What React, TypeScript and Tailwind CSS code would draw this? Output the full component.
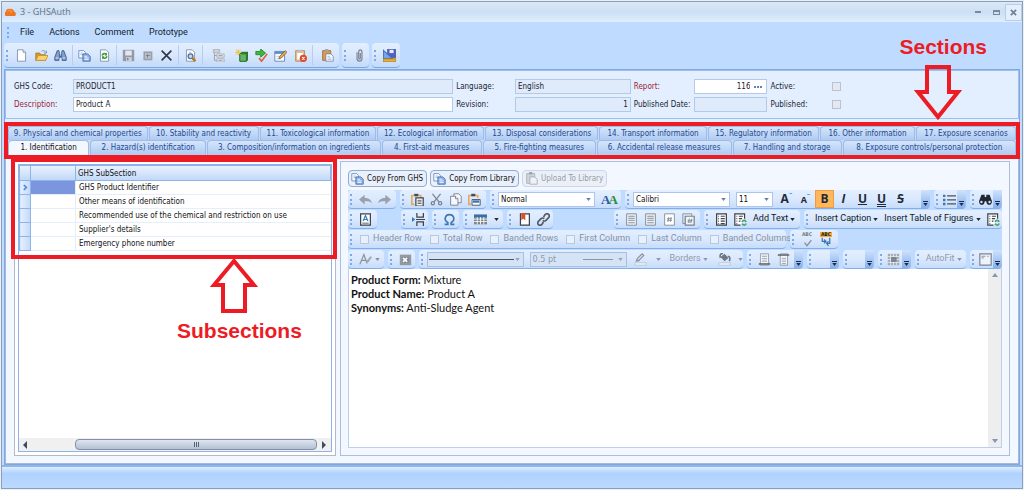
import type { ReactNode } from "react";
import clsx from "clsx";

const subsections = [
  "GHS Product Identifier",
  "Other means of identification",
  "Recommended use of the chemical and restriction on use",
  "Supplier's details",
  "Emergency phone number",
];

const upperTabs = [
  "9. Physical and chemical properties",
  "10. Stability and reactivity",
  "11. Toxicological information",
  "12. Ecological information",
  "13. Disposal considerations",
  "14. Transport information",
  "15. Regulatory information",
  "16. Other information",
  "17. Exposure scenarios",
];

const lowerTabs = [
  "1. Identification",
  "2. Hazard(s) identification",
  "3. Composition/information on ingredients",
  "4. First-aid measures",
  "5. Fire-fighting measures",
  "6. Accidental release measures",
  "7. Handling and storage",
  "8. Exposure controls/personal protection",
];

const page = (
  <path d="M3 1h7l3 3v11H3z" fill="#fff" stroke="#7287a8" />
);

const icons: Record<string, ReactNode> = {
  new: <>{page}<path d="M10 1v3h3" fill="#dbe6f5" stroke="#7287a8" /></>,
  open: (
    <>
      <path d="M1 5h5l1 2h6v7H1z" fill="#d69a32" stroke="#a8741d" />
      <path d="M4 8h12l-3 6H1z" fill="#fbd26c" stroke="#c48f2a" />
      <path d="M8 3c2-2 4-1 5 1m1-2v3h-3" fill="none" stroke="#5e87bd" />
    </>
  ),
  find: (
    <g fill="#7fa0cf" stroke="#2f4e82">
      <path d="M4 2h2l1 4v3h2V6l1-4h2l3 8v4h-5v-4H6v4H1v-4z" />
      <path d="M2 11h4M10 11h4M7 5h2" stroke="#e8f1ff" />
    </g>
  ),
  copy: (
    <>
      <path d="M1 2h6l2 2v7H1z" fill="#fff" stroke="#5e83bd" />
      <path d="M3 5h3M3 7h3" stroke="#8facd8" />
      <path d="M6 6h6l3 3v6H6z" fill="#8fb2e8" stroke="#3d66ab" />
      <path d="M8 9h3M8 11h5M8 13h5" stroke="#fff" />
    </>
  ),
  refresh: (
    <>
      {page}
      <path d="M5 8c1-3 4-3 5-1M11 9c-1 3-4 3-5 1" fill="none" stroke="#3c9a34" strokeWidth="2" />
      <path d="M11 4v4H8zM5 13V9h3z" fill="#3c9a34" />
    </>
  ),
  save: (
    <>
      <path d="M1 1h14v14H1z" fill="#9299a6" />
      <path d="M4 2h8v6H4z" fill="#e2e7ee" />
      <path d="M5 10h7v5H5z" fill="#cbd1da" />
      <path d="M6 11h2v3H6z" fill="#808895" />
    </>
  ),
  saveSmall: (
    <>
      <path d="M3 3h11v11H3z" fill="#9aa1ad" />
      <path d="M5 5h7v7H5z" fill="#bac1cb" />
      <path d="M8 6v5M6 8h5" stroke="#747d8b" />
    </>
  ),
  remove: <path d="M2 2l12 12M14 2L2 14" stroke="#303846" strokeWidth="2" />,
  preview: (
    <>
      {page}
      <path d="M6 4h3" stroke="#9cb0ca" />
      <circle cx="8" cy="9" r="3" fill="#b9d8f8" stroke="#536b8f" strokeWidth="1.5" />
      <path d="M10 11l4 4" stroke="#b8782c" strokeWidth="3" />
    </>
  ),
  tree: (
    <>
      <path d="M3 1v13h4M3 8h4" fill="none" stroke="#8d959f" />
      <path d="M1 0h9v5H1z" fill="#b7bdc5" />
      <path d="M6 6h9v4H6zM6 12h9v4H6z" fill="#e3e6ea" stroke="#a6adb6" />
      <path d="M3 2.500h5" stroke="#f4f6f9" />
      <path d="M8 8h5M8 14h5" stroke="#8d959f" />
    </>
  ),
  addCube: (
    <>
      <path d="M6 6l2-2h8v9l-2 2H6z" fill="#2e8a35" stroke="#175c20" />
      <path d="M6 6h8v9H6z" fill="#64b466" stroke="#217229" />
      <path d="M4 0v8M0 4h8M1 1l6 6M7 1L1 7" stroke="#efbd2c" />
    </>
  ),
  approve: (
    <>
      <path d="M1 3h6V0l6 5-6 5V7H1z" fill="#3fba37" stroke="#1f8520" />
      <path d="M5 11l3 4 7-9" fill="none" stroke="#e15a35" strokeWidth="2" />
    </>
  ),
  edit: (
    <>
      <path d="M1 3h12v12H1z" fill="#fff" stroke="#5279b3" />
      <path d="M1 3h12v3H1z" fill="#5d8bd0" />
      <path d="M3 9h6M3 12h5" stroke="#a9bddb" />
      <path d="M6 12l1-3 7-7 2 2-7 7z" fill="#e3ad46" stroke="#806030" />
    </>
  ),
  reject: (
    <>
      <path d="M2 2h11v13H2z" fill="#e9c08c" stroke="#a7865b" />
      <path d="M5 1h5v3H5z" fill="#b9bfc9" />
      <path d="M4 5h7v8H4z" fill="#fff" />
      <circle cx="11.500" cy="11.500" r="4.500" fill="#e04a2c" />
      <path d="M10 10l3 3M13 10l-3 3" stroke="#fff" strokeWidth="1.5" />
    </>
  ),
  paste: (
    <>
      <path d="M2 2h10v12H2z" fill="#d99b4c" stroke="#996a32" />
      <path d="M5 0h4v3H5z" fill="#a1a9b7" />
      <path d="M6 6h6l3 3v6H6z" fill="#fff" stroke="#6a84b0" />
      <path d="M8 9h3M8 11h5M8 13h5" stroke="#9db3d4" />
    </>
  ),
  clip: (
    <path d="M5 4v8c0 4 6 4 6 0V4c0-4-4-4-4 0v7c0 2 2 2 2 0V5" fill="none" stroke="#7d8794" strokeWidth="1.5" />
  ),
  layout: (
    <>
      <path d="M0 1l12 11H0z" fill="#4a84d8" stroke="#2857a8" />
      <path d="M5 0h11v11H5z" fill="#5463ba" />
      <path d="M8 1h5v4H8z" fill="#e6edff" />
      <path d="M1 3l9 8H1z" fill="#72a5ee" />
      <path d="M0 12h16v4H0z" fill="#e8ae36" stroke="#a0782c" />
    </>
  ),
  undo: <path d="M0 8l7-6v4c5 0 8 2 9 7-2-3-5-3-9-3v4z" fill="#9aa1ab" />,
  redo: <path d="M16 8L9 2v4c-5 0-8 2-9 7 2-3 5-3 9-3v4z" fill="#9aa1ab" />,
  pasteDark: (
    <>
      <path d="M4 14H1V3h11v3" fill="none" stroke="#e5a95f" strokeWidth="2" />
      <path d="M4 1h5v3H4z" fill="#444b55" />
      <path d="M6 6h9v10H6z" fill="#fff" stroke="#3b424b" strokeWidth="1.5" />
      <path d="M8 9h5M8 11h5M8 13h5" stroke="#3b424b" />
    </>
  ),
  cut: (
    <g fill="none" stroke="#7b828c" strokeWidth="1.5">
      <path d="M3 1l8 10M13 1L5 11" />
      <circle cx="3.500" cy="12.500" r="2" />
      <circle cx="12.500" cy="12.500" r="2" />
    </g>
  ),
  copyDark: (
    <g fill="#f4f8ff" stroke="#6d747e">
      <path d="M6 1h6l3 3v8H6z" />
      <path d="M2 4h6l3 3v8H2z" />
      <path d="M8 4v3h3" />
    </g>
  ),
  pasteSpecial: (
    <>
      <path d="M4 14H1V3h11v3" fill="none" stroke="#e5a95f" strokeWidth="2" />
      <path d="M4 1h5v3H4z" fill="#444b55" />
      <path d="M5 8h10v7H5z" fill="#fff" stroke="#3b424b" />
      <path d="M6 9h8v3H6z" fill="#3a78b5" />
    </>
  ),
  textBox: (
    <g fill="none" stroke="#39434f">
      <path d="M2 1h12v14H2z" fill="#fff" strokeWidth="1.500" />
      <path d="M5 10l3-7 3 7M6 8h4" stroke="#3a78b5" strokeWidth="1.5" />
      <path d="M4 12.500h8" />
    </g>
  ),
  pageBreak: (
    <g fill="none" stroke="#3b424b" strokeWidth="1.5">
      <path d="M6 0v5h8V0M6 16v-5h8v5M5 8h11" />
      <path d="M0 5l4 3-4 3z" fill="#3a78b5" stroke="none" />
    </g>
  ),
  omega: (
    <path d="M2 14h4v-2C0 8 3 2 8 2s8 6 2 10v2h4" fill="none" stroke="#3a78b5" strokeWidth="2" />
  ),
  table: (
    <>
      <path d="M0 2h16v12H0z" fill="#7c838c" />
      <path d="M0 2h16v3H0z" fill="#2e70b1" />
      <path d="M0 7.500h16M0 10.500h16M4 5v9M8 5v9M12 5v9" stroke="#fff" />
    </>
  ),
  bookmark: (
    <>
      <path d="M3 1h11v14H3z" fill="#fff" stroke="#3b424b" strokeWidth="1.500" />
      <path d="M4 0h5v9L6.500 7 4 9z" fill="#d8512f" />
    </>
  ),
  link: (
    <g fill="none" stroke="#545b65" strokeWidth="2">
      <path d="M8 5l2-3c3-3 7 1 4 4l-3 3c-1 1-3 1-4 0" />
      <path d="M8 11l-2 3c-3 3-7-1-4-4l3-3c1-1 3-1 4 0" />
    </g>
  ),
  pageLines: (
    <g fill="none" stroke="#747b85">
      <path d="M2 1h12v14H2z" fill="#eef3fa" />
      <path d="M4 4h8M4 6.500h8M4 9h8M4 12h8" />
    </g>
  ),
  pageNumber: (
    <g fill="none" stroke="#7b828c">
      <path d="M2 1h12v14H2z" fill="#fff" />
      <path d="M7 5l-1 6M10 5l-1 6M5 7h6M5 9h6" />
    </g>
  ),
  pageCount: (
    <g fill="none" stroke="#7b828c">
      <path d="M1 1h11v12H1z" />
      <path d="M4 4h11v11H4z" fill="#eef3fa" strokeWidth="1.500" />
      <path d="M9 7l-1 5M12 7l-1 5M7 9h6M7 11h5" />
    </g>
  ),
  contents: (
    <g fill="none" stroke="#3b424b">
      <path d="M2 1h12v14H2z" fill="#fff" strokeWidth="1.500" />
      <path d="M4 4h1M7 4h5M4 7h1M7 7h5M4 10h1M7 10h5M4 13h1M7 13h5" strokeWidth="1.500" />
    </g>
  ),
  contentsUpdate: (
    <g fill="none" stroke="#3b424b">
      <path d="M8 15H1V1h12v6" fill="#fff" strokeWidth="1.500" />
      <path d="M3 4h1M6 4h5M3 7h1M6 7h4M3 10h1M6 10h2M3 13h1" strokeWidth="1.500" />
      <path d="M10 11c1-3 4-2 5 0M15 13c-1 3-4 2-5 0" stroke="#4ca36c" strokeWidth="2" />
    </g>
  ),
  bullets: (
    <>
      <path d="M0 2h3v3H0zM0 7h3v3H0zM0 12h3v3H0z" fill="#3a78b5" />
      <path d="M5 3.500h11M5 8.500h11M5 13.500h11" stroke="#4b525c" strokeWidth="1.500" />
    </>
  ),
  binoculars: (
    <path d="M3 2h4v3h2V2h4l3 8c0 6-7 6-7 0H7c0 6-7 6-7 0zM3 9.500a1.500 1.500 0 100 3 1.500 1.500 0 000-3M13 9.500a1.500 1.500 0 100 3 1.500 1.500 0 000-3" fill="#202731" fillRule="evenodd" />
  ),
  pen: (
    <>
      <path d="M3 10l1-3 6-6 2 2-6 6zM3 10l4-1" fill="none" stroke="#8b929d" strokeWidth="1.500" />
      <path d="M1 12h14v3H1z" fill="#edf3fb" stroke="#b6c4d7" />
    </>
  ),
  fill: (
    <>
      <path d="M3 5l5-4 5 5-5 4z" fill="#717883" />
      <path d="M6 1c-3-1-4 2-3 5M12 4c3 0 3 3 2 6" fill="none" stroke="#717883" strokeWidth="2" />
      <path d="M1 12h14v3H1z" fill="#edf3fb" stroke="#b6c4d7" />
    </>
  ),
  footnote: (
    <g fill="none" stroke="#8a919b">
      <path d="M3 1h10v14H3z" fill="#eef3fa" />
      <path d="M5 4h6M5 7h6M5 10h6" />
      <path d="M1 13.500h14" stroke="#656c76" strokeWidth="2" />
    </g>
  ),
  endnote: (
    <g fill="none" stroke="#8a919b">
      <path d="M4 1h9v14H4z" fill="#eef3fa" />
      <path d="M6 7h5M6 10h5M6 13h5" />
      <path d="M1 2.500h14" stroke="#656c76" strokeWidth="2" />
    </g>
  ),
  cells: (
    <>
      <path d="M1 1h14v14H1z" fill="#a4abb5" />
      <path d="M4.500 1v14M8 1v14M11.500 1v14M1 4.500h14M1 8h14M1 11.500h14" stroke="#e9f1fd" />
      <path d="M5 5h7v6H5z" fill="#7d848e" />
    </>
  ),
  frame: (
    <g fill="none" stroke="#7d858f">
      <path d="M1 1h14v14H1z" fill="#edf3fc" strokeWidth="1.500" />
      <path d="M3 4h5M3 6h3M10 4h2" />
    </g>
  ),
  clearBox: (
    <>
      <path d="M1 2h14v13H1z" fill="#9299a3" />
      <path d="M4 5h8v7H4z" fill="#7d848e" />
      <path d="M5 6l5 5M10 6l-5 5" stroke="#fff" strokeWidth="2" />
    </>
  ),
  textEffects: (
    <>
      <path d="M1 14L6 2l4 11M3 9h6" fill="none" stroke="#8b929d" strokeWidth="1.500" />
      <path d="M9 12l1-3 4-5 2 1-4 6z" fill="#a1a8b2" />
    </>
  ),
  upload: (
    <>
      <path d="M2 2h10v12H2z" fill="#cdd3dc" stroke="#a8afb9" />
      <path d="M5 0h4v3H5z" fill="#9da4ae" />
      <path d="M6 6h6l3 3v6H6z" fill="#eef1f5" stroke="#a3aab4" />
    </>
  ),
  check: <path d="M4 9l4 5 7-9" fill="none" stroke="#868d97" strokeWidth="2" />,
  swap: <path d="M2 1v6h5M5 4l3 3-3 3M14 1v9h-4M12 7l-3 3 3 4" fill="none" stroke="#3a78b5" strokeWidth="2" />,
};

function Icon({ name, className = "size-[13px]" }: { name: string; className?: string }) {
  return (
    <svg viewBox="0 0 16 16" className={clsx("shrink-0", className)} aria-hidden="true">
      {icons[name]}
    </svg>
  );
}

function Caret({ className = "text-[#30435f]" }: { className?: string }) {
  return (
    <svg viewBox="0 0 6 4" className={clsx("h-[3px] w-[5px] shrink-0", className)} aria-hidden="true">
      <path d="M0 0h6L3 4z" fill="currentColor" />
    </svg>
  );
}

function Grip() {
  return <span className="ml-0.5 mr-1 h-[11px] shrink-0 border-l-2 border-dotted border-[#7fa8e6]" />;
}

function Tool({ name, label, className = "w-[19px]" }: { name: string; label: string; className?: string }) {
  return (
    <button type="button" aria-label={label} className={clsx("flex h-full shrink-0 items-center justify-center", className)}>
      <Icon name={name} />
    </button>
  );
}

// Toolbar strip with a dotted handle and, optionally, an overflow button
function Group({ children, className, more }: { children?: ReactNode; className?: string; more?: string }) {
  return (
    <div className={clsx("flex h-[19px] items-center rounded-sm border-b border-[#82aee9] bg-linear-to-b from-[#e3efff] via-[#dbe9fe] to-[#c6dcfb]", className)}>
      <Grip />
      {children}
      {more && (
        <button type="button" aria-label={more} className="ml-auto flex h-full w-[9px] shrink-0 flex-col items-center justify-end gap-px rounded-r-sm bg-linear-to-b from-[#d0e2fc] to-[#85b0ec] pb-0.5">
          <span className="h-px w-[5px] bg-[#1d2e4a]" />
          <Caret className="text-[#1d2e4a]" />
        </button>
      )}
    </div>
  );
}

function Drop({ label, value, className, disabled, children }: { label: string; value: string; className: string; disabled?: boolean; children?: ReactNode }) {
  return (
    <span className={clsx("relative flex h-[15px] shrink-0", className)}>
      <select
        aria-label={label}
        disabled={disabled}
        className={clsx("w-full appearance-none border pl-0.5 leading-[13px]", disabled ? "border-[#a9bfdd] bg-[#d5e3f6] text-[9px] text-[#8f99a8]" : "border-[#abc5ec] bg-white text-[8px] text-[#111]")}
      >
        <option>{value}</option>
      </select>
      {children}
      <span className="pointer-events-none absolute inset-y-0 right-1 flex items-center">
        <Caret className={disabled ? "text-[#98a3b3]" : "text-[#6080ae]"} />
      </span>
    </span>
  );
}

function MenuButton({ children, disabled }: { children: string; disabled?: boolean }) {
  return (
    <button type="button" disabled={disabled} className={clsx("flex shrink-0 items-center gap-0.5 whitespace-nowrap px-[3px] font-['Roboto',sans-serif] text-[9px]", disabled ? "text-[#919baa]" : "text-[#111827]")}>
      {children}
      <Caret className={disabled ? "text-[#8c96a5]" : "text-[#20293a]"} />
    </button>
  );
}

function Separator() {
  return <span className="mx-0.5 h-5 w-px shrink-0 bg-[#b4cef3]" />;
}

function TitleBar() {
  return (
    <header className="flex h-5 shrink-0 items-center bg-linear-to-b from-[#dce9f7] via-[#cbdff5] to-[#e1eefc] pl-[3px] font-['Open_Sans',sans-serif]">
      <svg viewBox="0 0 12 10" className="mr-1 h-[9px] w-[11px]" aria-hidden="true">
        <path d="M1 9a3 3 0 010-5 3 3 0 014-3 4 4 0 015 3 3 3 0 011 5z" fill="#ee7420" />
        <path d="M3 4l2-2 2 2M6 5l2-1" stroke="#ffb36c" fill="none" />
      </svg>
      <h1 className="text-[9px] text-[#66727f]">3 - GHSAuth</h1>
      <div className="ml-auto flex h-full items-center">
        <button type="button" aria-label="Minimize" className="flex w-[18px] justify-center"><span className="h-0.5 w-1.5 bg-[#78889b]" /></button>
        <button type="button" aria-label="Maximize" className="flex w-[18px] justify-center"><span className="h-[5px] w-[7px] border border-t-2 border-[#78889b]" /></button>
        <button type="button" aria-label="Close" className="flex h-[17px] w-[17px] items-center justify-center border border-[#b9cde5] bg-[#e3effc]">
          <svg viewBox="0 0 8 8" className="size-[7px]" aria-hidden="true"><path d="M1 1l6 6M7 1L1 7" stroke="#718196" strokeWidth="2" /></svg>
        </button>
      </div>
    </header>
  );
}

function MainToolbar() {
  const strip = "flex h-[25px] items-center rounded-sm border-b border-[#7aa6e0] bg-linear-to-b from-[#e3efff] via-[#d8e7fd] to-[#c3daf9]";
  return (
    <div className="flex gap-[3px] pl-0.5">
      <div className={strip}>
        <Grip />
        <Tool name="new" label="New" />
        <Tool name="open" label="Open" className="w-5" />
        <Tool name="find" label="Find" />
        <Separator />
        <Tool name="copy" label="Copy" />
        <Tool name="refresh" label="Refresh" className="w-5" />
        <Separator />
        <Tool name="save" label="Save" />
        <Tool name="saveSmall" label="Save and close" />
        <Tool name="remove" label="Delete" />
        <Separator />
        <Tool name="preview" label="Preview" />
        <Separator />
        <Tool name="tree" label="Structure" className="w-[26px]" />
        <Tool name="addCube" label="Add component" className="w-[21px]" />
        <Tool name="approve" label="Approve" />
        <Tool name="edit" label="Edit" />
        <Tool name="reject" label="Reject" className="w-5" />
        <Separator />
        <Tool name="paste" label="Paste" className="w-6" />
      </div>
      <div className={clsx(strip, "w-[27px]")}>
        <Grip />
        <Tool name="clip" label="Attachments" />
      </div>
      <div className={clsx(strip, "w-[28px]")}>
        <Grip />
        <Tool name="layout" label="Layout" />
      </div>
    </div>
  );
}

const field = "h-[15px] w-full min-w-0 border px-0.5 text-[8px] text-[#1c2431]";

function RecordForm() {
  return (
    <form className="grid grid-cols-[59fr_381fr_62fr_116fr_63fr_74fr_65fr_10fr_176fr] items-center gap-y-[3px] border border-[#9fc0ee] bg-[#e3efff] pt-2 pb-1.5 pl-2 text-[8px] text-[#1c2431]">
      <label htmlFor="code">GHS Code:</label>
      <input id="code" className={clsx(field, "border-[#b3c9e8] bg-[#dfeafb]")} defaultValue="PRODUCT1" readOnly />
      <label htmlFor="language" className="pl-[3px]">Language:</label>
      <input id="language" className={clsx(field, "border-[#b3c9e8] bg-[#dfeafb]")} defaultValue="English" readOnly />
      <label htmlFor="report" className="pl-[3px] text-[#9b1c35]">Report:</label>
      <div className="flex h-[15px] border border-[#b3c9e8] bg-white">
        <input id="report" className="w-full min-w-0 text-right text-[8px]" defaultValue="116" />
        <button type="button" aria-label="Choose report" className="flex w-4 shrink-0 items-center justify-center gap-px">
          <span className="size-0.5 bg-[#5f82bb]" />
          <span className="size-0.5 bg-[#5f82bb]" />
          <span className="size-0.5 bg-[#5f82bb]" />
        </button>
      </div>
      <label htmlFor="active" className="pl-[3px]">Active:</label>
      <input id="active" type="checkbox" className="size-[9px] appearance-none border border-[#b4c3d8] bg-[#e5e9ef]" />
      <span />
      <label htmlFor="description" className="text-[#9b1c35]">Description:</label>
      <input id="description" className={clsx(field, "border-[#b3c9e8] bg-white")} defaultValue="Product A" />
      <label htmlFor="revision" className="pl-[3px]">Revision:</label>
      <input id="revision" className={clsx(field, "border-[#b3c9e8] bg-[#dfeafb] text-right")} defaultValue="1" readOnly />
      <label htmlFor="published-date" className="whitespace-nowrap pl-[3px]">Published Date:</label>
      <input id="published-date" className={clsx(field, "border-[#b3c9e8] bg-[#dfeafb]")} readOnly />
      <label htmlFor="published" className="pl-[3px]">Published:</label>
      <input id="published" type="checkbox" className="size-[9px] appearance-none border border-[#b4c3d8] bg-[#e5e9ef]" />
      <span />
    </form>
  );
}

function SectionTabs() {
  const tab = "flex min-w-0 items-center justify-center overflow-hidden whitespace-nowrap rounded-t-sm border border-b-0 border-[#9dbbe6]";
  return (
    <nav role="tablist" aria-label="Sections" className="-mx-px border-4 border-[#ed1c24] bg-[#c3daf8] text-[8px] text-[#1f488f]">
      <div className="grid grid-cols-[141fr_111fr_118fr_108fr_114fr_109fr_112fr_96fr_101fr] gap-x-px">
        {upperTabs.map((name) => (
          <button key={name} type="button" role="tab" aria-selected={false} className={clsx(tab, "h-[14px] bg-linear-to-b from-[#d5e5fb] to-[#aecbf2]")}>{name}</button>
        ))}
      </div>
      <div className="grid grid-cols-[82fr_117fr_175fr_101fr_114fr_136fr_110fr_175fr] gap-x-px">
        {lowerTabs.map((name, i) => (
          <button key={name} type="button" role="tab" aria-selected={i === 0} className={clsx(tab, "h-[15px]", i === 0 ? "bg-[#f3f7ff] text-[#111]" : "bg-linear-to-b from-[#d5e5fb] to-[#aecbf2]")}>{name}</button>
        ))}
      </div>
    </nav>
  );
}

function SubsectionPanel() {
  return (
    <section className="relative flex w-[322px] shrink-0 border border-[#b6b9c2] bg-white px-[3px] pt-0.5 pb-[3px]">
      <div className="flex w-full flex-col border border-[#8fb3e6]">
        <table className="w-full table-fixed border-collapse text-left text-[8px] text-[#111]">
          <colgroup>
            <col className="w-[11px]" />
            <col className="w-[45px]" />
            <col />
          </colgroup>
          <thead>
            <tr className="h-[15px] bg-linear-to-b from-[#eaf2fe] to-[#bfd7f8]">
              <th className="border border-[#8fb3e6]" />
              <th className="border border-[#8fb3e6]" />
              <th className="border border-[#8fb3e6] py-0 pl-0.5 leading-[13px] font-normal">GHS SubSection</th>
            </tr>
          </thead>
          <tbody>
            {subsections.map((name, i) => (
              <tr key={name} className="h-[14px]">
                <td className="border border-[#8fb3e6] bg-linear-to-r from-[#e6f0fe] to-[#c2d9f9] p-0">
                  {i === 0 && (
                    <svg viewBox="0 0 6 8" className="mx-auto h-[7px] w-[5px]" aria-hidden="true"><path d="M1 1l3 3-3 3" fill="none" stroke="#4f86d9" strokeWidth="2" /></svg>
                  )}
                </td>
                <td className={clsx("border border-[#e6eefa] p-0", i === 0 && "bg-[#7b95de]")} />
                <td className="border-y border-[#e6eefa] py-0 pl-[3px] leading-[13px] whitespace-nowrap">{name}</td>
              </tr>
            ))}
          </tbody>
        </table>
        <div className="mt-auto flex h-[13px] items-center bg-[#f0f0f0] text-[#3f4a63]">
          <svg viewBox="0 0 4 8" className="mx-1 h-2 w-1" aria-hidden="true"><path d="M4 0v8L0 4z" fill="currentColor" /></svg>
          <div className="ml-11 flex h-[11px] flex-1 items-center justify-center gap-px rounded-sm border border-[#8490a8] bg-linear-to-b from-[#dfe6f0] to-[#b4c0d2]">
            <span className="h-[5px] w-px bg-[#59647a]" />
            <span className="h-[5px] w-px bg-[#59647a]" />
            <span className="h-[5px] w-px bg-[#59647a]" />
          </div>
          <svg viewBox="0 0 4 8" className="mx-[5px] h-2 w-1" aria-hidden="true"><path d="M0 0v8l4-4z" fill="currentColor" /></svg>
        </div>
      </div>
      <div className="pointer-events-none absolute -top-1 -left-1 h-[101px] w-[326px] border-4 border-[#ed1c24]" />
      <div className="pointer-events-none absolute top-[96px] left-[162px] flex flex-col items-center gap-1">
        <svg viewBox="0 0 48 56" className="mr-2.5 h-14 w-12" aria-hidden="true">
          <path d="M24 3L4 27h9v26h22V27h9z" fill="none" stroke="#ed1c24" strokeWidth="4" />
        </svg>
        <strong className="font-['Liberation_Sans',Arial,sans-serif] text-[21px] leading-[26px] text-[#ed1c24]">Subsections</strong>
      </div>
    </section>
  );
}

function TableOption({ name }: { name: string }) {
  return (
    <label className="flex items-center gap-1 whitespace-nowrap">
      <input type="checkbox" disabled className="size-[9px] appearance-none border border-[#b5c8e2] bg-[#e9f0fa]" />
      {name}
    </label>
  );
}

function EditorToolbars() {
  const style = "flex h-full w-[19px] shrink-0 items-center justify-center font-['Open_Sans',sans-serif] text-[12px] font-bold text-[#222b38]";
  return (
    <div className="flex flex-col gap-px bg-[#bfdbff]">
      <div className="flex gap-1">
        <Group className="w-12">
          <Tool name="undo" label="Undo" />
          <Tool name="redo" label="Redo" />
        </Group>
        <Group className="w-[86px]">
          <Tool name="pasteDark" label="Paste" />
          <Tool name="cut" label="Cut" />
          <Tool name="copyDark" label="Copy" />
          <Tool name="pasteSpecial" label="Paste special" />
        </Group>
        <Group className="w-[131px]">
          <Drop label="Style" value="Normal" className="w-[97px]" />
          <button type="button" aria-label="Styles" className="ml-1.5 flex items-end font-['Liberation_Serif',serif] text-[13px] leading-none font-bold">
            <span className="text-[#2b5aa6]">A</span>
            <span className="-ml-0.5 text-[#2b8b3b]">A</span>
          </button>
        </Group>
        <Group className="flex-1" more="More font options">
          <Drop label="Font" value="Calibri" className="w-[97px]" />
          <Drop label="Font size" value="11" className="mr-1 ml-1.5 w-[37px]" />
          <button type="button" aria-label="Grow font" className={style}>A<sup className="text-[7px] text-[#3a78b5]">ˆ</sup></button>
          <button type="button" aria-label="Shrink font" className="flex h-full w-[19px] shrink-0 items-center justify-center pt-0.5 font-['Open_Sans',sans-serif] text-[9px] font-bold text-[#222b38]">A<sup className="text-[7px] text-[#3a78b5]">ˇ</sup></button>
          <button type="button" aria-pressed="true" className={clsx(style, "border border-[#f09b3c] bg-[#ffb75e]")}>B</button>
          <button type="button" className={clsx(style, "font-['Liberation_Serif',serif] italic")}>I</button>
          <button type="button" className={clsx(style, "underline")}>U</button>
          <button type="button" className={clsx(style, "underline decoration-double")}>U</button>
          <button type="button" className={clsx(style, "line-through decoration-1")}>S</button>
        </Group>
        <Group className="w-8" more="More list options"><Tool name="bullets" label="Bullets" className="w-[15px]" /></Group>
        <Group className="w-8" more="More find options"><Tool name="binoculars" label="Find" className="w-[15px]" /></Group>
      </div>
      <div className="flex gap-1">
        <Group className="w-[29px]"><Tool name="textBox" label="Text box" /></Group>
        <Group className="ml-5 w-[27px]"><Tool name="pageBreak" label="Page break" /></Group>
        <Group className="w-[27px]"><Tool name="omega" label="Symbol" /></Group>
        <Group className="w-10">
          <Tool name="table" label="Table" />
          <Caret className="ml-1 text-[#20293a]" />
        </Group>
        <Group className="w-[46px]">
          <Tool name="bookmark" label="Bookmark" />
          <Tool name="link" label="Hyperlink" />
        </Group>
        <Group className="ml-auto w-[86px]">
          <Tool name="pageLines" label="Header" />
          <Tool name="pageLines" label="Footer" />
          <Tool name="pageNumber" label="Page number" />
          <Tool name="pageCount" label="Page count" />
        </Group>
        <Group className="w-[96px]">
          <Tool name="contents" label="Table of contents" />
          <Tool name="contentsUpdate" label="Update table of contents" />
          <MenuButton>Add Text</MenuButton>
        </Group>
        <Group className="w-[198px]">
          <MenuButton>Insert Caption</MenuButton>
          <MenuButton>Insert Table of Figures</MenuButton>
          <Tool name="contentsUpdate" label="Update figures" />
        </Group>
      </div>
      <div className="flex gap-1">
        <Group className="w-[438px]">
          <div className="flex gap-2 pl-1 font-['Roboto',sans-serif] text-[9px] text-[#8792a1]">
            <TableOption name="Header Row" />
            <TableOption name="Total Row" />
            <TableOption name="Banded Rows" />
            <TableOption name="First Column" />
            <TableOption name="Last Column" />
            <TableOption name="Banded Columns" />
          </div>
        </Group>
        <Group className="w-12">
          <button type="button" className="flex w-[18px] flex-col items-center text-[5px] leading-none font-bold text-[#747b85]">
            ABC
            <Icon name="check" className="size-2.5" />
          </button>
          <button type="button" className="flex w-5 flex-col items-center text-[5px] leading-none font-bold text-[#27221c]">
            <span className="bg-[#f5ab3c] px-px">ABC</span>
            <Icon name="swap" className="size-2.5" />
          </button>
        </Group>
      </div>
      <div className="flex gap-1">
        <Group className="w-9">
          <Tool name="textEffects" label="Text effects" />
          <Caret className="text-[#8b929d]" />
        </Group>
        <Group className="w-[27px]"><Tool name="clearBox" label="Clear" /></Group>
        <Group className="flex-1">
          <Drop label="Line style" value="" disabled className="w-[97px]">
            <span className="pointer-events-none absolute top-[7px] right-2.5 left-0.5 h-px bg-[#4b5360]" />
          </Drop>
          <Drop label="Line weight" value="0.5 pt" disabled className="ml-1.5 w-[97px]">
            <span className="pointer-events-none absolute top-[7px] right-3.5 h-px w-[30px] bg-[#8c96a5]" />
          </Drop>
          <Tool name="pen" label="Pen colour" className="ml-1 w-[19px]" />
          <Caret className="mx-1.5 text-[#8c96a5]" />
          <MenuButton disabled>Borders</MenuButton>
          <Tool name="fill" label="Fill colour" className="ml-1 w-[19px]" />
          <Caret className="ml-1 text-[#8c96a5]" />
        </Group>
        <Group className="w-[57px]" more="More note options">
          <Tool name="footnote" label="Footnote" />
          <Tool name="endnote" label="Endnote" />
        </Group>
        <Group className="w-8" more="More row options" />
        <Group className="w-8" more="More column options" />
        <Group className="w-[33px]" more="More cell options"><Tool name="cells" label="Cells" className="w-[15px]" /></Group>
        <Group className="w-[52px]"><MenuButton disabled>AutoFit</MenuButton></Group>
        <Group className="w-8" more="More frame options"><Tool name="frame" label="Frame" className="w-[15px]" /></Group>
      </div>
    </div>
  );
}

function EditorPanel() {
  const button = "flex h-[17px] items-center gap-[3px] rounded-sm border pr-[3px] pl-0.5 text-[8px] whitespace-nowrap";
  return (
    <section className="flex min-w-0 flex-1 flex-col border border-[#aebdd9] bg-[#f3f7ff] px-[7px] pt-2 pb-[7px]">
      <div className="mb-[3px] flex gap-[3px]">
        <button type="button" className={clsx(button, "border-[#93abcf] bg-[#e8f0fc] text-[#111]")}><Icon name="copy" />Copy From GHS</button>
        <button type="button" className={clsx(button, "border-[#93abcf] bg-[#e8f0fc] text-[#111]")}><Icon name="copy" />Copy From Library</button>
        <button type="button" disabled className={clsx(button, "border-[#ccd7e8] bg-[#ebf0f8] text-[#969ca6]")}><Icon name="upload" />Upload To Library</button>
      </div>
      <EditorToolbars />
      <div className="flex flex-1 border border-t-0 border-[#bccfec] bg-white">
        <div className="flex-1 pt-1 pl-0.5 font-['Lato',sans-serif] text-[11px] leading-[14px] text-[#111]">
          <p><b>Product Form:</b> Mixture</p>
          <p><b>Product Name:</b> Product A</p>
          <p><b>Synonyms:</b> Anti-Sludge Agent</p>
        </div>
        <div className="flex w-[13px] flex-col items-center justify-between bg-[#eeeeee] py-1 text-[#8793b8]">
          <svg viewBox="0 0 6 4" className="h-1 w-1.5" aria-hidden="true"><path d="M0 4h6L3 0z" fill="currentColor" /></svg>
          <svg viewBox="0 0 6 4" className="h-1 w-1.5" aria-hidden="true"><path d="M0 0h6L3 4z" fill="currentColor" /></svg>
        </div>
      </div>
    </section>
  );
}

export default function App() {
  return (
    <div className="flex min-h-screen flex-col bg-[#e9f0f8] p-px font-['DejaVu_Sans_Condensed','DejaVu_Sans',sans-serif]">
      <div className="relative flex flex-1 flex-col border border-[#8c9fba] bg-[#bfdbff]">
        <TitleBar />
        <div className="flex h-[21px] items-center gap-[15px] pl-[3px] font-['Roboto',sans-serif] text-[9px] text-[#111c2e]">
          <Grip />
          <button type="button" className="-ml-2">File</button>
          <button type="button">Actions</button>
          <button type="button">Comment</button>
          <button type="button">Prototype</button>
        </div>
        <MainToolbar />
        <main className="mx-0.5 mt-px flex flex-1 flex-col border border-[#7fa8e0] bg-[#e3efff]">
          <RecordForm />
          <div className="mt-[3px]">
            <SectionTabs />
          </div>
          <div className="flex flex-1 gap-1 border border-t-0 border-[#a5b9dc] bg-[#f3f7ff] px-2 pt-0.5 pb-[7px]">
            <SubsectionPanel />
            <EditorPanel />
          </div>
        </main>
        <footer className="h-[23px] border-t-2 border-[#8fb5e9] bg-linear-to-b from-[#e0edff] from-0% via-[#b0d2ff] via-30% to-[#bcd9ff]" />
        <div className="pointer-events-none absolute top-8 right-[35px] flex flex-col items-center gap-1">
          <strong className="font-['Liberation_Sans',Arial,sans-serif] text-[21px] leading-[26px] text-[#ed1c24]">Sections</strong>
          <svg viewBox="0 0 48 56" className="mr-2.5 h-14 w-12" aria-hidden="true">
            <path d="M24 53L4 28h9V3h22v25h9z" fill="none" stroke="#ed1c24" strokeWidth="4" />
          </svg>
        </div>
      </div>
    </div>
  );
}
